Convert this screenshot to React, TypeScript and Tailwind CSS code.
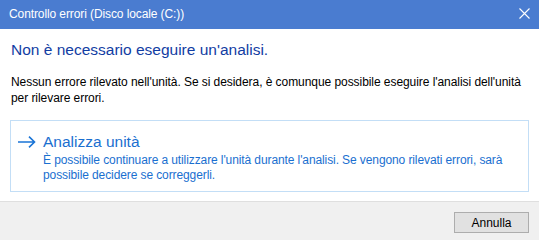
import React from "react";

function CloseIcon() {
  return (
    <svg width="11" height="11" viewBox="0 0 11 11" className="block">
      <path d="M0.5 0.5 L10.5 10.5 M10.5 0.5 L0.5 10.5" stroke="#ffffff" strokeWidth="1.1" fill="none" />
    </svg>
  );
}

function ArrowIcon() {
  return (
    <svg width="18" height="12" viewBox="0 0 18 12" className="block">
      <path d="M0 6 H16.5 M11 0.7 L16.5 6 L11 11.3" stroke="#1a74d6" strokeWidth="1.6" fill="none" />
    </svg>
  );
}

export default function App() {
  return (
    <div className="w-[539px] h-[240px] flex flex-col bg-white overflow-hidden font-['Liberation_Sans',Arial,sans-serif]">
      {/* Title bar */}
      <div className="h-[29px] shrink-0 bg-[#4a7cd0] flex items-start justify-between pl-[9px] pr-[9px]">
        <div className="pt-[6px] text-[12px] leading-[16px] tracking-[-0.1px] text-white whitespace-nowrap">
          Controllo errori (Disco locale (C:))
        </div>
        <div className="pt-[8px]">
          <CloseIcon />
        </div>
      </div>

      {/* Content */}
      <div className="flex-1 flex flex-col">
        <div className="mt-[11px] pl-[11px] text-[15.5px] leading-[20px] text-[#123da3] whitespace-nowrap">
          Non è necessario eseguire un'analisi.
        </div>
        <div className="mt-[14px] pl-[11px] text-[12px] leading-[16px] tracking-[-0.06px] text-black whitespace-nowrap">
          Nessun errore rilevato nell'unità. Se si desidera, è comunque possibile eseguire l'analisi dell'unità
          <br />
          per rilevare errori.
        </div>

        <div className="mt-[14px] mx-[10px] h-[72px] border border-[#c3def6] flex items-start">
          <div className="pl-[7px] pt-[15px] pr-[7px]">
            <ArrowIcon />
          </div>
          <div className="flex flex-col pt-[11px]">
            <div className="text-[15.5px] leading-[20px] text-[#1a6fd0] whitespace-nowrap">Analizza unità</div>
            <div className="mt-[1px] text-[12px] leading-[15px] tracking-[-0.1px] text-[#1a6fd0] whitespace-nowrap">
              È possibile continuare a utilizzare l'unità durante l'analisi. Se vengono rilevati errori, sarà
              <br />
              possibile decidere se correggerli.
            </div>
          </div>
        </div>
      </div>

      {/* Footer */}
      <div className="h-[39px] shrink-0 bg-[#f0f0f0] border-t border-[#dfdfdf] flex justify-end items-start pt-[10px] pr-[10px]">
        <button className="w-[75px] h-[21px] bg-[#e1e1e1] border border-[#adadad] text-[12px] leading-[16px] text-black flex items-center justify-center">
          Annulla
        </button>
      </div>
    </div>
  );
}
